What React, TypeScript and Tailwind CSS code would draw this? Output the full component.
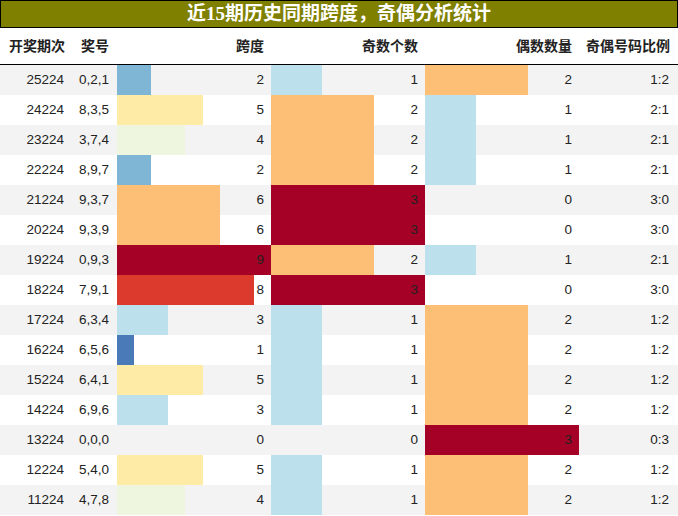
const rows: [string, string, number, number, number, string][] = [
  ["25224", "0,2,1", 2, 1, 2, "1:2"],
  ["24224", "8,3,5", 5, 2, 1, "2:1"],
  ["23224", "3,7,4", 4, 2, 1, "2:1"],
  ["22224", "8,9,7", 2, 2, 1, "2:1"],
  ["21224", "9,3,7", 6, 3, 0, "3:0"],
  ["20224", "9,3,9", 6, 3, 0, "3:0"],
  ["19224", "0,9,3", 9, 2, 1, "2:1"],
  ["18224", "7,9,1", 8, 3, 0, "3:0"],
  ["17224", "6,3,4", 3, 1, 2, "1:2"],
  ["16224", "6,5,6", 1, 1, 2, "1:2"],
  ["15224", "6,4,1", 5, 1, 2, "1:2"],
  ["14224", "6,9,6", 3, 1, 2, "1:2"],
  ["13224", "0,0,0", 0, 0, 3, "0:3"],
  ["12224", "5,4,0", 5, 1, 2, "1:2"],
  ["11224", "4,7,8", 4, 1, 2, "1:2"],
];

const spanColors: Record<number, string> = {
  1: "#4a7ab8",
  2: "#7fb6d6",
  3: "#bde1ec",
  4: "#eef6df",
  5: "#feeba6",
  6: "#fdbf75",
  8: "#dc3a2c",
  9: "#a50026",
};

const countColors: Record<number, string> = {
  1: "#bde1ec",
  2: "#fdbf75",
  3: "#a50026",
};

const BarCell = ({ value, max, color }: { value: number; max: number; color?: string }) => (
  <div className="relative flex items-center justify-end pr-[7px]">
    {value > 0 && (
      <div
        className="absolute inset-y-0 left-0"
        style={{ width: `${(value / max) * 100}%`, background: color }}
      />
    )}
    <span className="relative">{value}</span>
  </div>
);

export default function App() {
  return (
    <div
      className="w-[678px] h-[516px] bg-white text-[#222]"
      style={{ fontFamily: '"Liberation Sans", "Noto Sans CJK SC", sans-serif' }}
    >
      <div
        className="h-[28px] border border-black bg-[#808000] flex items-center justify-center text-white text-[19px] font-bold"
        style={{ fontFamily: '"Liberation Serif", "Noto Sans CJK SC", serif' }}
      >
        近15期历史同期跨度，奇偶分析统计
      </div>
      <div className="grid grid-cols-[70px_47px_154px_154px_154px_99px] h-[37px] border-b border-black text-[14px] font-bold">
        <div className="flex items-center justify-end pr-[5px]">开奖期次</div>
        <div className="flex items-center justify-end pr-[8px]">奖号</div>
        <div className="flex items-center justify-end pr-[7px]">跨度</div>
        <div className="flex items-center justify-end pr-[7px]">奇数个数</div>
        <div className="flex items-center justify-end pr-[7px]">偶数数量</div>
        <div className="flex items-center justify-end pr-[8px]">奇偶号码比例</div>
      </div>
      {rows.map(([issue, nums, span, odd, even, ratio], i) => (
        <div
          key={issue}
          className={`grid grid-cols-[70px_47px_154px_154px_154px_99px] h-[30px] text-[13.5px] ${
            i % 2 === 0 ? "bg-[#f3f3f3]" : "bg-white"
          }`}
        >
          <div className="flex items-center justify-end pr-[6px]">{issue}</div>
          <div className="flex items-center justify-end pr-[8px]">{nums}</div>
          <BarCell value={span} max={9} color={spanColors[span]} />
          <BarCell value={odd} max={3} color={countColors[odd]} />
          <BarCell value={even} max={3} color={countColors[even]} />
          <div className="flex items-center justify-end pr-[9px]">{ratio}</div>
        </div>
      ))}
    </div>
  );
}
